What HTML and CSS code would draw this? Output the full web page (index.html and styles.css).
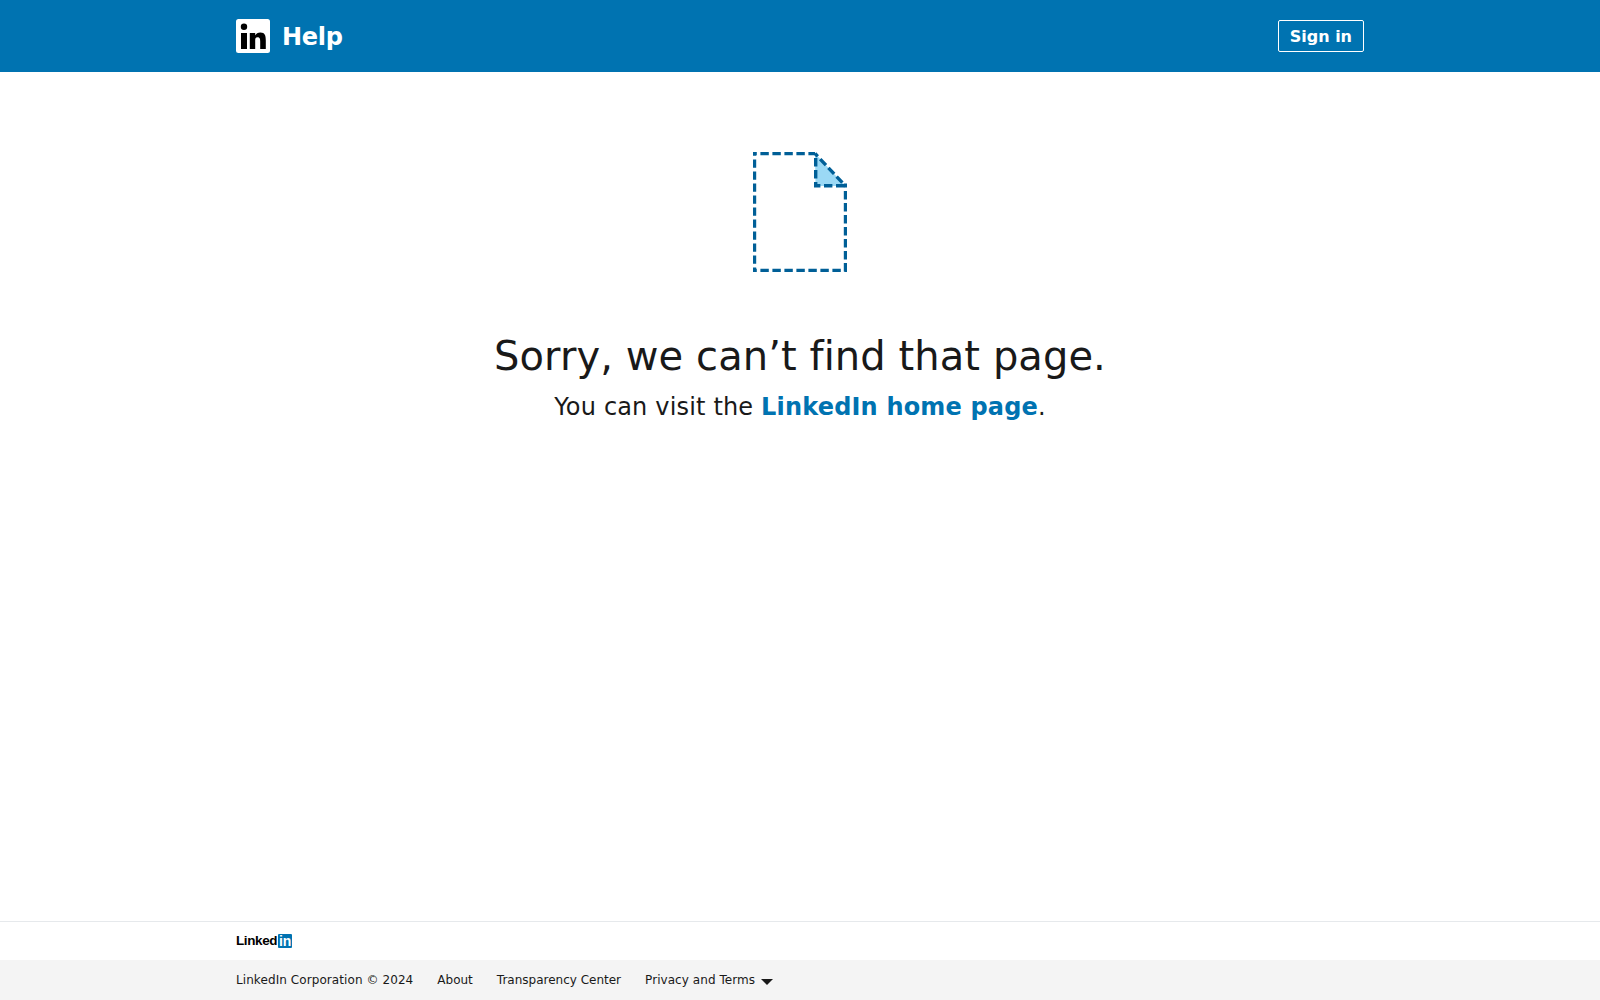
FILE: index.html
```html
<!DOCTYPE html>
<html lang="en">
<head>
<meta charset="utf-8">
<title>LinkedIn Help</title>
<link rel="stylesheet" href="styles.css">
</head>
<body>
<div class="page">
  <header class="topbar">
    <div class="wrap topbar-inner">
      <a class="brand" href="#">
        <svg class="brand-logo" viewBox="0 0 34 34" width="34" height="34" aria-hidden="true">
          <rect width="34" height="34" rx="2.5" fill="#fff"/>
          <path fill="#000" d="M5 14h6v16H5zM8 4.600a3.200 3.200 0 1 1 0 6.400 3.200 3.200 0 0 1 0-6.400zM13.800 14h5.400v2.300h.1c.8-1.400 2.500-2.800 5.100-2.800 4.600 0 5.400 3.200 5.400 7.800V30h-5.600v-7.600c0-1.800-.1-4.100-2.600-4.100s-2.400 2-2.400 4.100V30h-5.400z"/>
        </svg>
        <span class="brand-name">Help</span>
      </a>
      <a class="signin" href="#">Sign in</a>
    </div>
  </header>
  <main class="content">
    <svg class="illustration" viewBox="0 0 94 120" width="94" height="120" aria-hidden="true">
      <path class="fold-fill" d="M62 1.500 L92.500 34 H62.500 Z"/>
      <path class="dash dash-outer" d="M-0.200 1.500 H62 M1.500 -0.200 V118.500 M-0.200 118.500 H94 M92.500 31.500 V120 M62 1.500 L92.500 34"/>
      <path class="dash" d="M62.700 6 V33.700 H92"/>
    </svg>
    <h1 class="title">Sorry, we can’t find that page.</h1>
    <p class="subtitle">You can visit the <a class="home-link" href="#">LinkedIn home page</a>.</p>
  </main>
  <footer class="footer">
    <div class="footer-logo">
      <div class="wrap">
        <span class="wordmark">Linked<span class="wordmark-in">in</span></span>
      </div>
    </div>
    <div class="footer-bar">
      <div class="wrap footer-links">
        <span class="copyright">LinkedIn Corporation © 2024</span>
        <a href="#">About</a>
        <a href="#">Transparency Center</a>
        <a class="menu-link" href="#">Privacy and Terms<span class="caret"></span></a>
      </div>
    </div>
  </footer>
</div>
</body>
</html>
```
FILE: styles.css
```css
* { box-sizing: border-box; }
html, body { margin: 0; padding: 0; }
body {
  font-family: "DejaVu Sans", Verdana, sans-serif;
  font-variant-ligatures: none;
  color: #191919;
  background: #fff;
}
a { color: inherit; text-decoration: none; }
.page {
  min-height: 100vh;
  display: flex;
  flex-direction: column;
}
.wrap {
  width: 1128px;
  margin: 0 auto;
}
.topbar {
  height: 72px;
  background: #0073b1;
  color: #fff;
  flex: none;
}
.topbar-inner {
  height: 100%;
  display: flex;
  align-items: center;
  justify-content: space-between;
}
.brand {
  display: flex;
  align-items: center;
  gap: 12px;
}
.brand-logo { display: block; }
.brand-name {
  padding-top: 1px;
  font-size: 24px;
  font-weight: 700;
  line-height: 32px;
  letter-spacing: -0.25px;
}
.signin {
  display: block;
  height: 32px;
  padding: 0 11px;
  border: 1px solid #fff;
  border-radius: 2px;
  font-size: 16px;
  font-weight: 700;
  line-height: 31px;
}
.content {
  flex: 1;
  display: flex;
  flex-direction: column;
  align-items: center;
  padding-top: 80px;
}
.illustration {
  display: block;
  margin-bottom: 60px;
}
.fold-fill { fill: #9bd9f5; }
.dash {
  fill: none;
  stroke: #005f97;
  stroke-width: 3.4px;
  stroke-dasharray: 8.4 3.6;
}
.dash-outer { stroke-dashoffset: 4.4; }
.title {
  margin: 0;
  font-size: 40px;
  font-weight: 400;
  line-height: 48px;
  letter-spacing: 0.08px;
}
.subtitle {
  margin: 11px 0 0;
  font-size: 24px;
  line-height: 32px;
  letter-spacing: 0.17px;
}
.home-link {
  color: #0073b1;
  font-weight: 700;
}
.footer { flex: none; }
.footer-logo {
  height: 39px;
  border-top: 1px solid #e6e9ec;
  display: flex;
  align-items: center;
}
.wordmark {
  display: flex;
  align-items: center;
  font-family: "Liberation Sans", Arial, sans-serif;
  font-size: 13.5px;
  font-weight: 700;
  line-height: 14px;
  letter-spacing: -0.4px;
  color: #000;
}
.wordmark-in {
  margin-left: 1px;
  width: 14px;
  height: 14px;
  background: #0073b1;
  color: #fff;
  font-size: 14px;
  line-height: 15px;
  text-align: center;
  letter-spacing: 0;
  border-radius: 1px;
}
.footer-bar {
  height: 40px;
  background: #f4f4f4;
}
.footer-links {
  height: 100%;
  display: flex;
  align-items: center;
  gap: 24px;
  font-size: 12px;
  line-height: 16px;
  color: #191919;
}
.copyright { letter-spacing: 0.08px; }
.menu-link {
  display: flex;
  align-items: center;
  letter-spacing: 0.06px;
}
.caret {
  margin-left: 6px;
  margin-top: 3px;
  width: 0;
  height: 0;
  border-left: 6px solid transparent;
  border-right: 6px solid transparent;
  border-top: 6px solid #191919;
}
```
